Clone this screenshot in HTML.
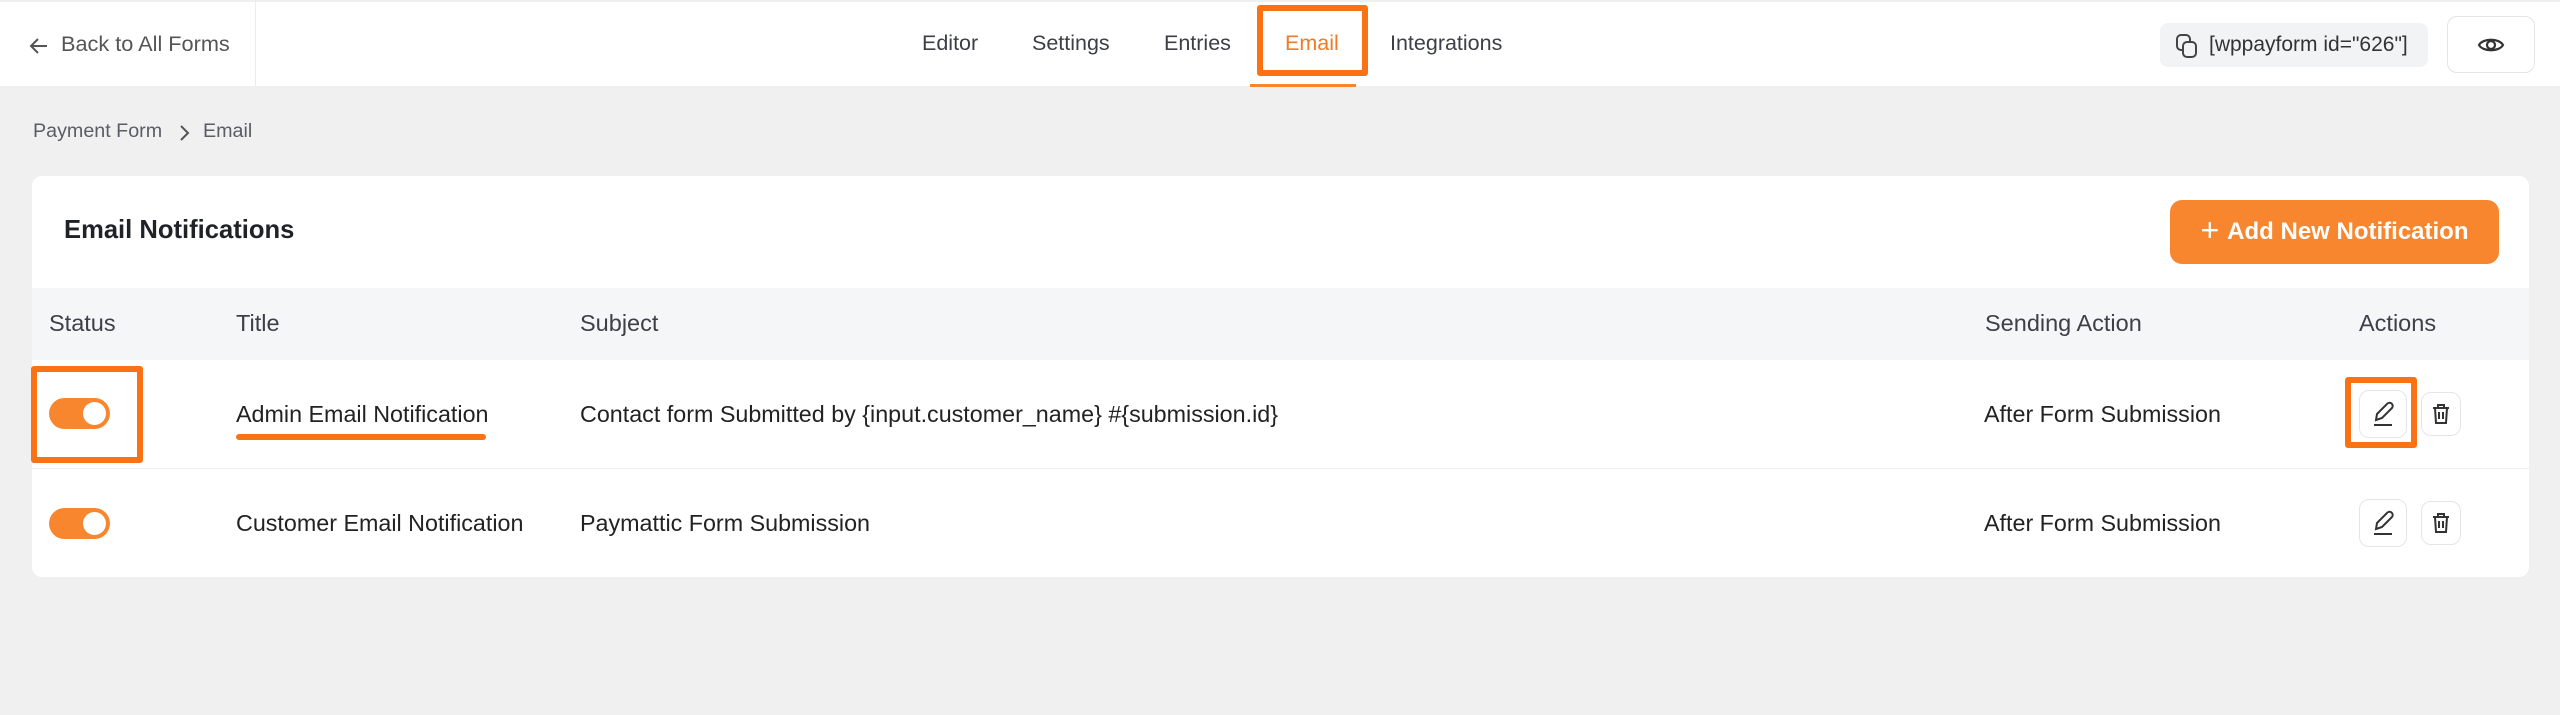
<!DOCTYPE html>
<html><head><meta charset="utf-8"><style>
*{box-sizing:border-box;margin:0;padding:0}
body{width:2560px;height:715px;background:#f0f0f1;font-family:"Liberation Sans",sans-serif;position:relative;overflow:hidden;color:#1f2328}
.a{position:absolute}
.hdr{left:0;top:0;width:2560px;height:86px;background:#fff;border-top:2px solid #f0f0f1}
.nav{font-size:21.5px;color:#3c3f45;top:31px}
.th{font-size:23.5px;color:#3d4047;top:310px}
.td{font-size:23.3px;color:#222;}
.tog{width:61px;height:31px;border-radius:16px;background:#f7862f}
.tog::after{content:"";position:absolute;right:4px;top:4px;width:23px;height:23px;border-radius:50%;background:#fff}
.btn{border:1px solid #e3e5e8;border-radius:10px;background:#fff;display:flex;align-items:center;justify-content:center}
.ob{border:6px solid #f97316;border-radius:3px}
</style></head><body>
<div class="a hdr"></div>
<div class="a" style="left:255px;top:0;width:1px;height:86px;background:#ececec"></div>
<svg class="a" style="left:28px;top:35px" width="22" height="22" viewBox="0 0 22 22"><path d="M19 11H4M10 4L3 11l7 7" fill="none" stroke="#555" stroke-width="2"/></svg>
<div class="a" style="left:61px;top:31px;font-size:21.7px;color:#555">Back to All Forms</div>
<div class="a nav" style="left:922px">Editor</div>
<div class="a nav" style="left:1032px">Settings</div>
<div class="a nav" style="left:1164px">Entries</div>
<div class="a ob" style="left:1257px;top:5px;width:111px;height:71px"></div>
<div class="a nav" style="left:1285px;color:#f07b22">Email</div>
<div class="a" style="left:1250px;top:84px;width:106px;height:3px;background:#f7862f"></div>
<div class="a nav" style="left:1390px">Integrations</div>
<div class="a" style="left:2160px;top:23px;width:268px;height:44px;background:#f2f3f5;border-radius:8px"></div>
<svg class="a" style="left:2175px;top:33px" width="24" height="26" viewBox="0 0 24 26"><rect x="2" y="2" width="13" height="15" rx="4" fill="none" stroke="#444" stroke-width="2"/><rect x="8" y="9" width="13" height="15" rx="4" fill="#f2f3f5" stroke="#444" stroke-width="2"/></svg>
<div class="a" style="left:2209px;top:33px;font-size:21px;color:#333">[wppayform id="626"]</div>
<div class="a btn" style="left:2447px;top:16px;width:88px;height:57px"><svg width="28" height="20" viewBox="0 0 28 20"><path d="M2 10C6 3 22 3 26 10C22 17 6 17 2 10Z" fill="none" stroke="#333" stroke-width="2.2"/><circle cx="14" cy="10" r="4" fill="none" stroke="#333" stroke-width="2.2"/></svg></div>
<div class="a" style="left:33px;top:120px;font-size:19.7px;color:#5a5d63">Payment Form</div>
<svg class="a" style="left:178px;top:124px" width="12" height="18" viewBox="0 0 12 18"><path d="M3 2l7 7-7 7" fill="none" stroke="#555" stroke-width="2"/></svg>
<div class="a" style="left:203px;top:120px;font-size:19.7px;color:#5a5d63">Email</div>
<div class="a" style="left:32px;top:176px;width:2497px;height:401px;background:#fff;border-radius:10px;overflow:hidden">
 <div class="a" style="left:0;top:112px;width:100%;height:72px;background:#f5f6f8"></div>
 <div class="a" style="left:0;top:292px;width:100%;height:1px;background:#eeeff1"></div>
</div>
<div class="a" style="left:64px;top:216px;font-size:25.6px;font-weight:bold;color:#1f2328">Email Notifications</div>
<div class="a" style="left:2170px;top:200px;width:329px;height:64px;background:#f7862f;border-radius:12px;color:#fff;font-size:24px;font-weight:bold;display:flex;align-items:center;justify-content:center"><span style="font-weight:normal;font-size:32px;margin-right:8px;margin-top:-3px">+</span>Add New Notification</div>
<div class="a th" style="left:49px">Status</div>
<div class="a th" style="left:236px">Title</div>
<div class="a th" style="left:580px">Subject</div>
<div class="a th" style="left:1985px">Sending Action</div>
<div class="a th" style="left:2359px">Actions</div>
<div class="a ob" style="left:31px;top:366px;width:112px;height:97px"></div>
<div class="a tog" style="left:49px;top:398px"></div>
<div class="a td" style="left:236px;top:401px">Admin Email Notification</div>
<div class="a" style="left:236px;top:434px;width:250px;height:6px;background:#f97316;border-radius:3px"></div>
<div class="a td" style="left:580px;top:401px">Contact form Submitted by {input.customer_name} #{submission.id}</div>
<div class="a td" style="left:1984px;top:401px">After Form Submission</div>
<div class="a ob" style="left:2345px;top:377px;width:72px;height:71px"></div>
<div class="a btn" style="left:2359px;top:390px;width:48px;height:48px"><svg width="26" height="28" viewBox="0 0 26 28"><path d="M6 20l1-6L17 4a3 3 0 0 1 5 4L12 18z" fill="none" stroke="#333" stroke-width="2"/><path d="M4 25h18" stroke="#333" stroke-width="2"/></svg></div>
<div class="a btn" style="left:2421px;top:392px;width:40px;height:44px"><svg width="22" height="24" viewBox="0 0 22 24"><path d="M3 6h16M8 6V3h6v3M5 6l1 15h10l1-15M9 10v7M13 10v7" fill="none" stroke="#333" stroke-width="2"/></svg></div>
<div class="a tog" style="left:49px;top:508px"></div>
<div class="a td" style="left:236px;top:510px">Customer Email Notification</div>
<div class="a td" style="left:580px;top:510px">Paymattic Form Submission</div>
<div class="a td" style="left:1984px;top:510px">After Form Submission</div>
<div class="a btn" style="left:2359px;top:499px;width:48px;height:48px"><svg width="26" height="28" viewBox="0 0 26 28"><path d="M6 20l1-6L17 4a3 3 0 0 1 5 4L12 18z" fill="none" stroke="#333" stroke-width="2"/><path d="M4 25h18" stroke="#333" stroke-width="2"/></svg></div>
<div class="a btn" style="left:2421px;top:501px;width:40px;height:44px"><svg width="22" height="24" viewBox="0 0 22 24"><path d="M3 6h16M8 6V3h6v3M5 6l1 15h10l1-15M9 10v7M13 10v7" fill="none" stroke="#333" stroke-width="2"/></svg></div>
</body></html>
